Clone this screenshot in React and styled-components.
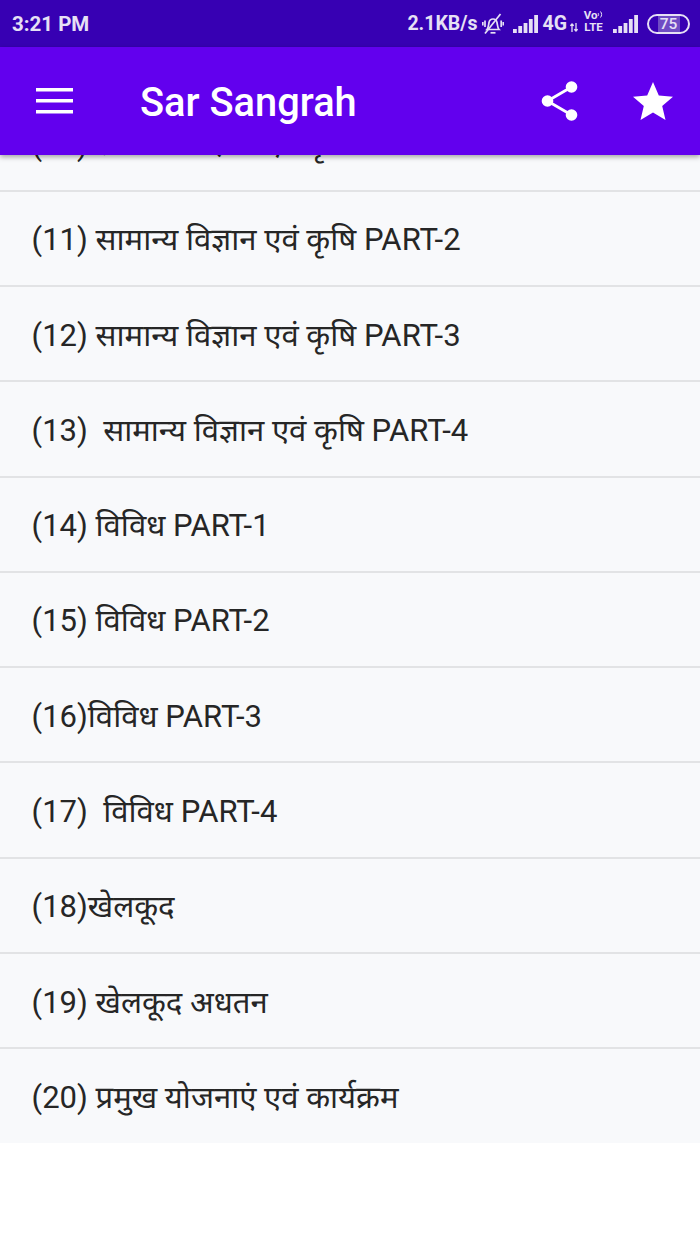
import React from 'react'
import styled, { createGlobalStyle } from 'styled-components'

const items = [
  '(10) सामान्य विज्ञान एवं कृषि PART-1',
  '(11) सामान्य विज्ञान एवं कृषि PART-2',
  '(12) सामान्य विज्ञान एवं कृषि PART-3',
  '(13)  सामान्य विज्ञान एवं कृषि PART-4',
  '(14) विविध PART-1',
  '(15) विविध PART-2',
  '(16)विविध PART-3',
  '(17)  विविध PART-4',
  '(18)खेलकूद',
  '(19) खेलकूद अधतन',
  '(20) प्रमुख योजनाएं एवं कार्यक्रम',
]

function Bars() {
  return (
    <svg width="26" height="18" viewBox="0 0 26 18" fill="#e6e0f5">
      <rect x="0" y="14" width="3.8" height="4" />
      <rect x="5.300" y="11" width="3.8" height="7" />
      <rect x="10.600" y="8" width="3.8" height="10" />
      <rect x="15.900" y="4" width="3.8" height="14" />
      <rect x="21.200" y="0" width="3.8" height="18" />
    </svg>
  )
}

export default function App() {
  return (
    <Page>
      <GlobalStyle />
      <StatusBar>
        <Clock>3:21 PM</Clock>
        <StatusRight>
          <Speed>2.1KB/s</Speed>
          <BellIcon width="22" height="22" viewBox="0 0 22 22" fill="none" stroke="#e6e0f5" strokeWidth="1.7">
            <path d="M5 16.500c1.500-1.500 1.500-4.500 2-7 .5-2.200 2.300-3.500 4-3.500s3.500 1.300 4 3.500c.5 2.500.5 5.500 2 7z" />
            <path d="M8.500 19.800h5" />
            <path d="M3 20.500L18.500 1" />
            <path d="M3 7.500v6.500M.8 9v3.500M19.200 7.500v6.500M21.300 9v3.500" />
          </BellIcon>
          <SignalSlot><Bars /></SignalSlot>
          <Network>4G</Network>
          <ArrowsIcon width="8" height="9" viewBox="0 0 8 9" fill="none" stroke="#e6e0f5" strokeWidth="1.300">
            <path d="M2 9V1M.3 2.800L2 1l1.700 1.800M6 0v8M4.300 6.200L6 8l1.700-1.800" />
          </ArrowsIcon>
          <VoLte>
            <VoLine>
              Vo
              <svg width="6" height="9" viewBox="0 0 6 9" fill="none" stroke="#e6e0f5" strokeWidth="1">
                <path d="M1 3c.8 1 .8 2 0 3M3.500 1.500c1.500 2 1.500 4 0 6" />
              </svg>
            </VoLine>
            <span>LTE</span>
          </VoLte>
          <SignalSlot $last><Bars /></SignalSlot>
          <Battery><BatteryFill /><BatteryLabel>75</BatteryLabel></Battery>
        </StatusRight>
      </StatusBar>
      <AppBar>
        <MenuIcon width="38" height="26" viewBox="0 0 38 26" fill="#fff">
          <rect x="0" y="0" width="37" height="3.500" />
          <rect x="0" y="11" width="37" height="3.500" />
          <rect x="0" y="22" width="37" height="3.500" />
        </MenuIcon>
        <Title>Sar Sangrah</Title>
        <Actions>
          <svg width="38" height="40" viewBox="0 0 38 40" fill="#fff">
            <circle cx="6.500" cy="20" r="5.800" />
            <circle cx="30.500" cy="6" r="5.800" />
            <circle cx="30.500" cy="34" r="5.800" />
            <path d="M6.500 20L30.500 6M6.500 20l24 14" stroke="#fff" strokeWidth="2.800" />
          </svg>
          <svg width="40" height="38" viewBox="0 0 40 38" fill="#fff">
            <path d="M20 0l5.800 13.500 14.200 1.200-10.800 9.400 3.300 13.900L20 30.600 7.500 38l3.300-13.900L0 14.700l14.200-1.200z" />
          </svg>
        </Actions>
      </AppBar>
      <ListViewport>
        <List>
          {items.map((item) => (
            <Row key={item}>{item}</Row>
          ))}
        </List>
      </ListViewport>
    </Page>
  )
}

const GlobalStyle = createGlobalStyle`
  html, body {
    margin: 0;
    padding: 0;
    background: #fff;
  }
`

const Page = styled.div`
  width: 700px;
  height: 1244px;
  overflow: hidden;
  display: flex;
  flex-direction: column;
  font-family: Roboto, "Noto Sans", "Noto Sans Devanagari", "Lohit Devanagari", sans-serif;
`

const StatusBar = styled.div`
  height: 47px;
  flex: none;
  background: #3700b3;
  color: #e6e0f5;
  display: flex;
  align-items: center;
  justify-content: space-between;
  padding: 0 10px 0 12px;
`

const Clock = styled.div`
  font-size: 20.500px;
  font-weight: 700;
`

const StatusRight = styled.div`
  display: flex;
  align-items: center;
`

const Speed = styled.div`
  font-size: 19.500px;
  font-weight: 700;
  margin-right: 4px;
`

const BellIcon = styled.svg`
  flex: none;
`

const SignalSlot = styled.div`
  display: flex;
  margin: 0 ${(p) => (p.$last ? '8px' : '4px')} 0 9px;
`

const Network = styled.div`
  font-size: 19.500px;
  font-weight: 700;
`

const ArrowsIcon = styled.svg`
  flex: none;
  margin: 7px 5px 0 3px;
`

const VoLte = styled.div`
  display: flex;
  flex-direction: column;
  font-size: 11.500px;
  font-weight: 700;
  line-height: 14px;
  height: 24px;
  justify-content: center;
  gap: 0;
  align-items: center;
  width: 21px;
  margin-top: -4px;
`

const VoLine = styled.span`
  display: flex;
  align-items: center;
  height: 10px;
`

const Battery = styled.div`
  position: relative;
  width: 43px;
  height: 20px;
  box-sizing: border-box;
  border: 2px solid #e6e0f5;
  border-radius: 10px;
  overflow: hidden;
`

const BatteryFill = styled.div`
  position: absolute;
  left: 9px;
  top: 0;
  bottom: 0;
  width: 22px;
  background: #6f4cc4;
`

const BatteryLabel = styled.div`
  position: absolute;
  inset: 0;
  text-align: center;
  font-size: 15.500px;
  line-height: 16px;
  font-weight: 500;
`

const AppBar = styled.header`
  height: 108px;
  flex: none;
  background: #6200ee;
  display: flex;
  align-items: center;
  padding: 0 27px 0 36px;
  position: relative;
  z-index: 2;
  box-shadow: 0 2px 5px rgba(0, 0, 0, 0.35);
`

const MenuIcon = styled.svg`
  flex: none;
`

const Title = styled.h1`
  margin: 2px 0 0 66px;
  font-size: 39.800px;
  font-weight: 500;
  color: #fff;
  flex: 1;
`

const Actions = styled.div`
  display: flex;
  align-items: center;
  gap: 54px;
`

const ListViewport = styled.main`
  flex: none;
  height: 988px;
  overflow: hidden;
`

const List = styled.div`
  margin-top: -58.500px;
  background: #f8f9fb;
`

const Row = styled.div`
  height: 95.270px;
  box-sizing: border-box;
  display: flex;
  align-items: center;
  padding-left: 31.500px;
  font-size: 31.050px;
  color: #262626;
  white-space: pre;
  border-bottom: 2px solid #e2e3e5;

  &:last-child {
    border-bottom: none;
    padding-bottom: 2px;
  }
`
